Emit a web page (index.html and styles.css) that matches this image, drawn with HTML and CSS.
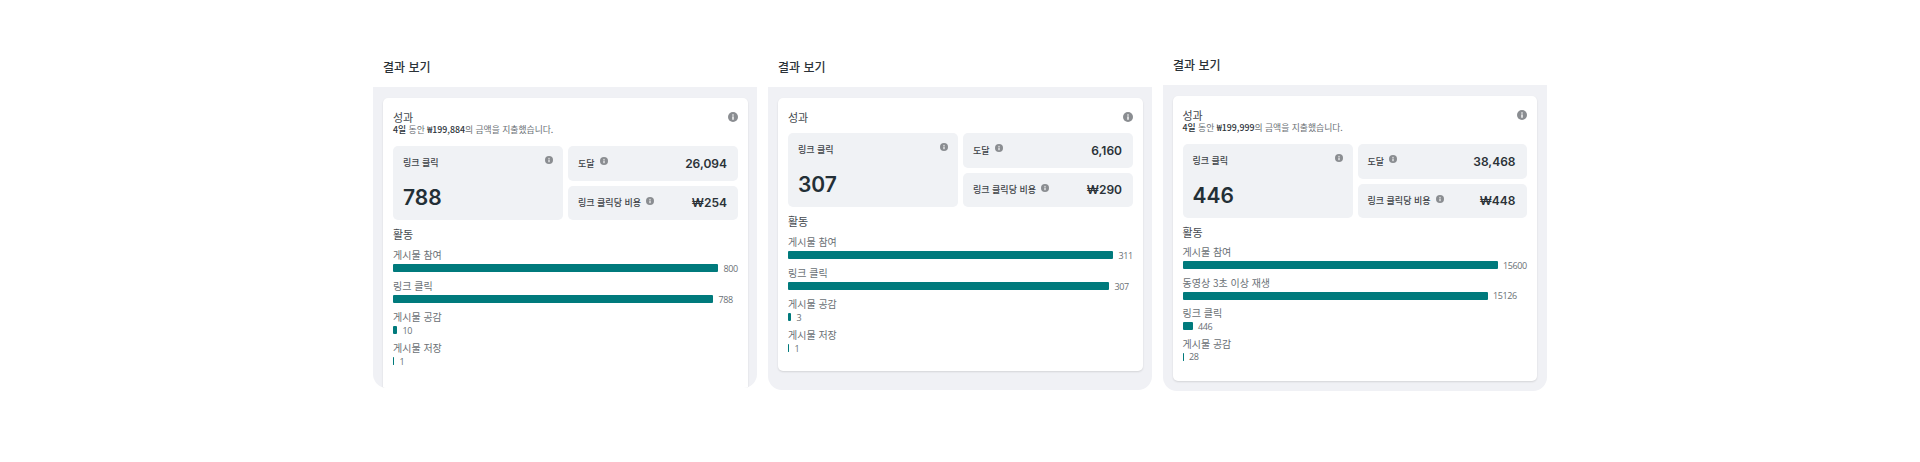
FILE: index.html
```html
<!DOCTYPE html>
<html lang="ko">
<head>
    <meta charset="UTF-8">
    <meta name="viewport" content="width=device-width, initial-scale=1.0">
    <title>결과 보기</title>
    <link rel="stylesheet" href="styles.css">
</head>
<body>
    <svg width="0" height="0" class="icon-defs">
        <symbol id="info" viewBox="0 0 16 16">
            <circle cx="8" cy="8" r="8" fill="#8a8d91"/>
            <rect x="6.9" y="7" width="2.2" height="5.4" fill="#fff"/>
            <circle cx="8" cy="4.7" r="1.3" fill="#fff"/>
        </symbol>
    </svg>

    <main class="results">
        <!-- 첫번째 결과 -->
        <section class="result result-first">
            <h2 class="result-title">결과 보기</h2>
            <div class="panel panel-clipped">
                <div class="card">
                    <div class="card-head">
                        <div>
                            <h3 class="section-title">성과</h3>
                            <p class="spend"><b>4일</b> 동안 <b>₩199,884</b>의 금액을 지출했습니다.</p>
                        </div>
                        <svg class="icon icon-lg"><use href="#info"/></svg>
                    </div>
                    <div class="tiles">
                        <div class="tile tile-main">
                            <div class="tile-top">
                                <span class="tile-label">링크 클릭</span>
                                <svg class="icon"><use href="#info"/></svg>
                            </div>
                            <div class="tile-big">788</div>
                        </div>
                        <div class="tile tile-row">
                            <span class="tile-label">도달</span>
                            <svg class="icon"><use href="#info"/></svg>
                            <span class="tile-value">26,094</span>
                        </div>
                        <div class="tile tile-row">
                            <span class="tile-label">링크 클릭당 비용</span>
                            <svg class="icon"><use href="#info"/></svg>
                            <span class="tile-value">₩254</span>
                        </div>
                    </div>
                    <h3 class="section-title activity-title">활동</h3>
                    <div class="metric">
                        <div class="metric-label">게시물 참여</div>
                        <div class="metric-row"><span class="bar" style="width: 325px"></span><span class="metric-value">800</span></div>
                    </div>
                    <div class="metric">
                        <div class="metric-label">링크 클릭</div>
                        <div class="metric-row"><span class="bar" style="width: 320px"></span><span class="metric-value">788</span></div>
                    </div>
                    <div class="metric">
                        <div class="metric-label">게시물 공감</div>
                        <div class="metric-row"><span class="bar" style="width: 4px"></span><span class="metric-value">10</span></div>
                    </div>
                    <div class="metric">
                        <div class="metric-label">게시물 저장</div>
                        <div class="metric-row"><span class="bar" style="width: 1px"></span><span class="metric-value">1</span></div>
                    </div>
                </div>
            </div>
        </section>

        <!-- 두번째 결과 -->
        <section class="result result-second">
            <h2 class="result-title">결과 보기</h2>
            <div class="panel">
                <div class="card">
                    <div class="card-head">
                        <div>
                            <h3 class="section-title">성과</h3>
                        </div>
                        <svg class="icon icon-lg"><use href="#info"/></svg>
                    </div>
                    <div class="tiles">
                        <div class="tile tile-main">
                            <div class="tile-top">
                                <span class="tile-label">링크 클릭</span>
                                <svg class="icon"><use href="#info"/></svg>
                            </div>
                            <div class="tile-big">307</div>
                        </div>
                        <div class="tile tile-row">
                            <span class="tile-label">도달</span>
                            <svg class="icon"><use href="#info"/></svg>
                            <span class="tile-value">6,160</span>
                        </div>
                        <div class="tile tile-row">
                            <span class="tile-label">링크 클릭당 비용</span>
                            <svg class="icon"><use href="#info"/></svg>
                            <span class="tile-value">₩290</span>
                        </div>
                    </div>
                    <h3 class="section-title activity-title">활동</h3>
                    <div class="metric">
                        <div class="metric-label">게시물 참여</div>
                        <div class="metric-row"><span class="bar" style="width: 325px"></span><span class="metric-value">311</span></div>
                    </div>
                    <div class="metric">
                        <div class="metric-label">링크 클릭</div>
                        <div class="metric-row"><span class="bar" style="width: 321px"></span><span class="metric-value">307</span></div>
                    </div>
                    <div class="metric">
                        <div class="metric-label">게시물 공감</div>
                        <div class="metric-row"><span class="bar" style="width: 3px"></span><span class="metric-value">3</span></div>
                    </div>
                    <div class="metric">
                        <div class="metric-label">게시물 저장</div>
                        <div class="metric-row"><span class="bar" style="width: 1px"></span><span class="metric-value">1</span></div>
                    </div>
                </div>
            </div>
        </section>

        <!-- 세번째 결과 -->
        <section class="result result-third">
            <h2 class="result-title">결과 보기</h2>
            <div class="panel">
                <div class="card">
                    <div class="card-head">
                        <div>
                            <h3 class="section-title">성과</h3>
                            <p class="spend"><b>4일</b> 동안 <b>₩199,999</b>의 금액을 지출했습니다.</p>
                        </div>
                        <svg class="icon icon-lg"><use href="#info"/></svg>
                    </div>
                    <div class="tiles">
                        <div class="tile tile-main">
                            <div class="tile-top">
                                <span class="tile-label">링크 클릭</span>
                                <svg class="icon"><use href="#info"/></svg>
                            </div>
                            <div class="tile-big">446</div>
                        </div>
                        <div class="tile tile-row">
                            <span class="tile-label">도달</span>
                            <svg class="icon"><use href="#info"/></svg>
                            <span class="tile-value">38,468</span>
                        </div>
                        <div class="tile tile-row">
                            <span class="tile-label">링크 클릭당 비용</span>
                            <svg class="icon"><use href="#info"/></svg>
                            <span class="tile-value">₩448</span>
                        </div>
                    </div>
                    <h3 class="section-title activity-title">활동</h3>
                    <div class="metric">
                        <div class="metric-label">게시물 참여</div>
                        <div class="metric-row"><span class="bar" style="width: 315px"></span><span class="metric-value">15600</span></div>
                    </div>
                    <div class="metric">
                        <div class="metric-label">동영상 3초 이상 재생</div>
                        <div class="metric-row"><span class="bar" style="width: 305px"></span><span class="metric-value">15126</span></div>
                    </div>
                    <div class="metric">
                        <div class="metric-label">링크 클릭</div>
                        <div class="metric-row"><span class="bar" style="width: 10px"></span><span class="metric-value">446</span></div>
                    </div>
                    <div class="metric">
                        <div class="metric-label">게시물 공감</div>
                        <div class="metric-row"><span class="bar" style="width: 1px"></span><span class="metric-value">28</span></div>
                    </div>
                </div>
            </div>
        </section>
    </main>
</body>
</html>
```

FILE: styles.css
```css
body {
    margin: 0;
    background-color: #fff;
    color: #1c2b33;
    font-family: "Noto Sans CJK KR", "Noto Sans", sans-serif;
}
h2, h3, p {
    margin: 0;
}
.icon-defs {
    display: block;
    height: 0;
}
.results {
    display: flex;
    justify-content: center;
    align-items: flex-start;
    gap: 11px;
    padding-top: 55px;
}
.result {
    width: 384px;
}
.result-first,
.result-second {
    padding-top: 2px;
}
.result-title {
    padding-left: 10px;
    font-size: 12px;
    font-weight: 500;
    line-height: 20px;
    margin-bottom: 10px;
    color: #2b3238;
}

/* 회색 패널 */
.panel {
    box-sizing: border-box;
    padding: 11px 9px 0 10px;
    background-color: #f0f1f5;
    border-radius: 0 0 14px 14px;
    overflow: hidden;
}
.panel-clipped {
    height: 301px;
}
.panel-clipped .card {
    height: 320px;
}
.result-second .panel {
    height: 303px;
}
.result-third .panel {
    height: 306px;
    padding-left: 9.5px;
    padding-right: 10.5px;
}
.card {
    box-sizing: border-box;
    padding: 12px 10px 17px;
    background-color: #fff;
    border-radius: 5px;
    box-shadow: 0 1px 2px rgba(0, 0, 0, 0.12);
}
.result-third .card {
    padding-bottom: 18px;
}
.card-head {
    display: flex;
    justify-content: space-between;
    align-items: flex-start;
    margin-bottom: 9px;
}
.section-title {
    font-size: 11px;
    font-weight: 400;
    line-height: 14px;
    color: #44494f;
}
.spend {
    font-size: 8.8px;
    line-height: 11px;
    margin-bottom: 2px;
    color: #6a7075;
}
.spend b {
    font-weight: 500;
    color: #2b3238;
}
.icon {
    flex: none;
    width: 8px;
    height: 8px;
}
.icon-lg {
    width: 10px;
    height: 10px;
    margin-top: 2px;
}

/* 지표 타일 */
.tiles {
    display: grid;
    grid-template-columns: 170px 1fr;
    grid-template-rows: 34.5px 34.5px;
    gap: 5px;
}
.tile {
    box-sizing: border-box;
    background-color: #f0f2f5;
    border-radius: 5px;
}
.tile-main {
    grid-row: span 2;
    padding: 10px 10px 0;
}
.tile-top {
    display: flex;
    justify-content: space-between;
    align-items: flex-start;
}
.tile-label {
    font-size: 9px;
    font-weight: 500;
    line-height: 13px;
    color: #3d4247;
}
.tile-big {
    margin-top: 15px;
    font-family: Inter, "Noto Sans", sans-serif;
    font-size: 21px;
    font-weight: 600;
    line-height: 28px;
    color: #232f36;
}
.tile-row {
    display: flex;
    align-items: center;
    padding: 0 11px 0 10px;
}
.tile-row .icon {
    margin: -4px 0 0 5px;
}
.tile-value {
    margin-left: auto;
    font-family: Inter, "Noto Sans", sans-serif;
    font-size: 12px;
    font-weight: 600;
    color: #2b3238;
}

/* 활동 막대 */
.activity-title {
    margin: 7px 0 7px;
}
.result-third .activity-title {
    margin-bottom: 6px;
}
.metric {
    margin-bottom: 5px;
}
.result-third .metric {
    margin-bottom: 4.6px;
}
.metric:last-child {
    margin-bottom: 0;
}
.metric-label {
    font-size: 10px;
    line-height: 13px;
    color: #6a7075;
}
.metric-row {
    display: flex;
    align-items: center;
    gap: 5.5px;
    height: 12px;
    margin-top: 1px;
}
.bar {
    flex: none;
    height: 8px;
    background-color: #007a7c;
    border-radius: 1px;
}
.metric-value {
    font-family: "Open Sans", sans-serif;
    font-size: 9px;
    letter-spacing: -0.4px;
    color: #6a7075;
}
```
